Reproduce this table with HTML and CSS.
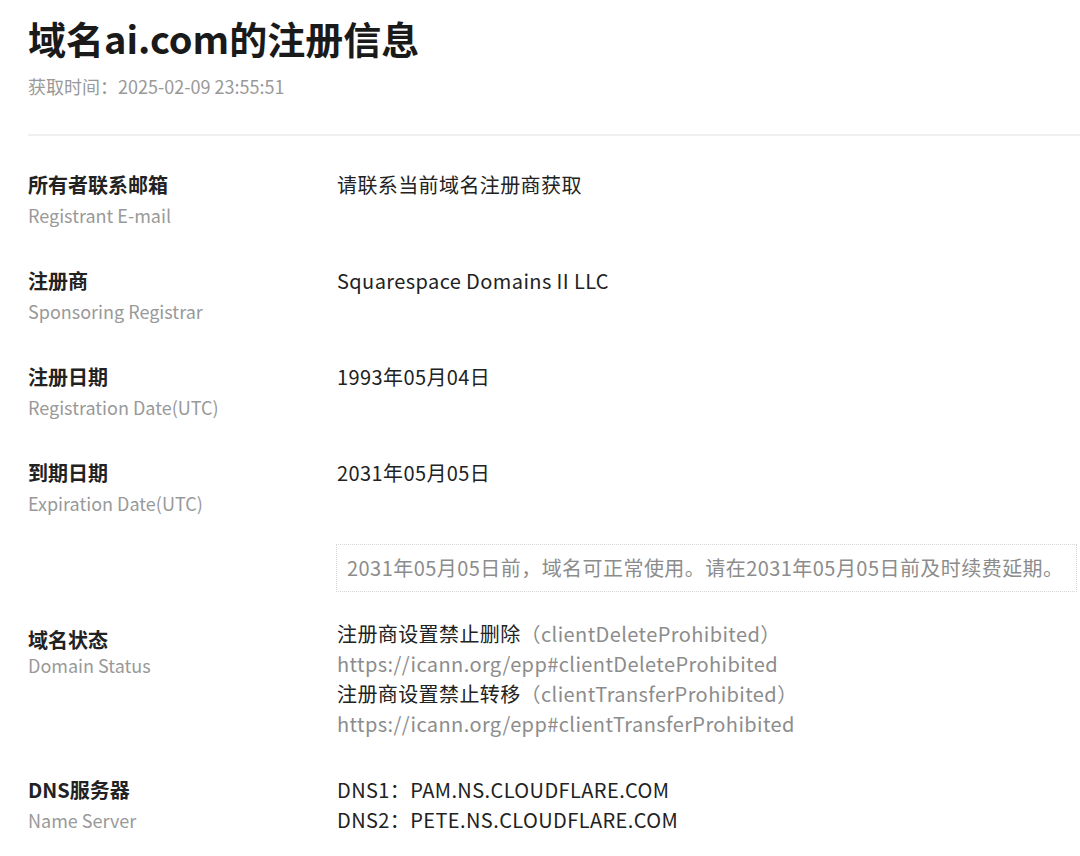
FILE: index.html
```html
<!DOCTYPE html>
<html lang="zh-CN">
  <head>
    <meta charset="UTF-8" />
    <meta name="viewport" content="width=device-width, initial-scale=1.0" />
    <title>域名ai.com的注册信息</title>
    <link rel="stylesheet" href="styles.css">
  </head>
  <body>
    <div class="page">
      <header class="whois-header">
        <h1>域名ai.com的注册信息</h1>
        <p class="fetch-time">获取时间：2025-02-09 23:55:51</p>
      </header>

      <div class="whois-list">
        <div class="row">
          <div class="label">
            <div class="label-cn">所有者联系邮箱</div>
            <div class="label-en">Registrant E-mail</div>
          </div>
          <div class="value">请联系当前域名注册商获取</div>
        </div>

        <div class="row">
          <div class="label">
            <div class="label-cn">注册商</div>
            <div class="label-en">Sponsoring Registrar</div>
          </div>
          <div class="value">Squarespace Domains II LLC</div>
        </div>

        <div class="row">
          <div class="label">
            <div class="label-cn">注册日期</div>
            <div class="label-en">Registration Date(UTC)</div>
          </div>
          <div class="value">1993年05月04日</div>
        </div>

        <div class="row row-tight">
          <div class="label">
            <div class="label-cn">到期日期</div>
            <div class="label-en">Expiration Date(UTC)</div>
          </div>
          <div class="value">2031年05月05日</div>
        </div>

        <div class="row row-note">
          <div class="label"></div>
          <div class="value">
            <div class="expire-note">2031年05月05日前，域名可正常使用。请在2031年05月05日前及时续费延期。</div>
          </div>
        </div>

        <div class="row row-status">
          <div class="label">
            <div class="label-cn">域名状态</div>
            <div class="label-en">Domain Status</div>
          </div>
          <div class="value">
            <div>注册商设置禁止删除<span class="muted">（clientDeleteProhibited）</span></div>
            <div class="muted">https://icann.org/epp#clientDeleteProhibited</div>
            <div>注册商设置禁止转移<span class="muted">（clientTransferProhibited）</span></div>
            <div class="muted">https://icann.org/epp#clientTransferProhibited</div>
          </div>
        </div>

        <div class="row">
          <div class="label">
            <div class="label-cn">DNS服务器</div>
            <div class="label-en">Name Server</div>
          </div>
          <div class="value">
            <div>DNS1：PAM.NS.CLOUDFLARE.COM</div>
            <div>DNS2：PETE.NS.CLOUDFLARE.COM</div>
          </div>
        </div>
      </div>
    </div>
  </body>
</html>
```

FILE: styles.css
```css
/* 基本样式 */
* {
  margin: 0;
  padding: 0;
  box-sizing: border-box;
}

body {
  font-family: "Noto Sans CJK SC", sans-serif;
  background-color: #fff;
  color: #333;
  overflow: hidden;
}

.page {
  padding: 12px 0 0 28px;
}

/* 标题 */
.whois-header {
  padding-bottom: 34px;
  border-bottom: 2px solid #efefef;
}

.whois-header h1 {
  font-size: 38px;
  line-height: 52px;
  font-weight: bold;
  color: #1a1a1a;
}

.fetch-time {
  margin-top: 8px;
  font-size: 18px;
  line-height: 28px;
  color: #999;
}

/* 信息列表 */
.whois-list {
  padding-top: 34px;
}

.row {
  display: grid;
  grid-template-columns: 309px 1fr;
  padding-bottom: 36px;
}

.label-cn {
  font-size: 20px;
  line-height: 30px;
  font-weight: bold;
  color: #222;
}

.label-en {
  font-size: 18px;
  line-height: 30px;
  color: #999;
}

.value {
  font-size: 20px;
  line-height: 30px;
  letter-spacing: 0.4px;
  color: #222;
}

.muted {
  color: #8c8c8c;
}

.row-tight {
  padding-bottom: 26px;
}

.row-note {
  padding-bottom: 27px;
}

.expire-note {
  display: inline-block;
  margin-left: -1px;
  padding: 8px 12px 8px 10px;
  border: 1px dotted #d6d6d6;
  letter-spacing: 0.45px;
  color: #8c8c8c;
  white-space: nowrap;
}

.row-status .label {
  padding-top: 6px;
}

.row-status .label-en {
  line-height: 20px;
}
```
